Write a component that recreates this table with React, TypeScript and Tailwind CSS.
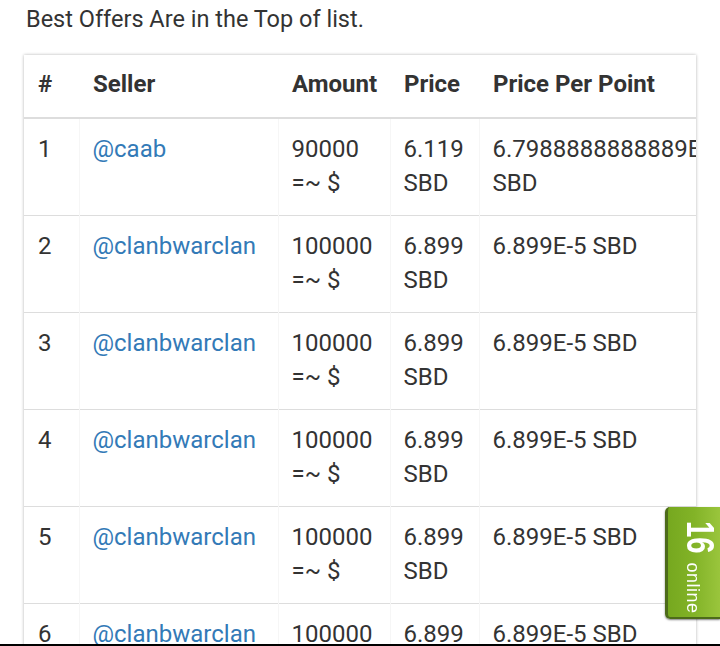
const offers = [
  { id: 1, seller: "@caab", amount: "90000", price: "6.119", ppp: "6.7988888888889E-5" },
  { id: 2, seller: "@clanbwarclan", amount: "100000", price: "6.899", ppp: "6.899E-5" },
  { id: 3, seller: "@clanbwarclan", amount: "100000", price: "6.899", ppp: "6.899E-5" },
  { id: 4, seller: "@clanbwarclan", amount: "100000", price: "6.899", ppp: "6.899E-5" },
  { id: 5, seller: "@clanbwarclan", amount: "100000", price: "6.899", ppp: "6.899E-5" },
  { id: 6, seller: "@clanbwarclan", amount: "100000", price: "6.899", ppp: "6.899E-5" },
];

export default function App() {
  return (
    <div className="h-[646px] overflow-hidden bg-white font-['Roboto','Liberation_Sans',sans-serif] text-[#333]">
      <p className="pl-[26px] pt-[3px] text-[23.5px] leading-[32px]">Best Offers Are in the Top of list.</p>

      <div className="ml-[24px] mt-[20px] w-[672px] overflow-hidden bg-white shadow-[0_0_3px_rgba(0,0,0,0.3)]">
        <table className="w-[672px] table-fixed border-collapse text-[24px] leading-[34px]">
          <colgroup>
            <col className="w-[55px]" />
            <col className="w-[199px]" />
            <col className="w-[112px]" />
            <col className="w-[89px]" />
            <col className="w-[217px]" />
          </colgroup>
          <thead>
            <tr className="border-b-2 border-[#dddddd] text-left">
              <th className="pl-[14px] pt-[12px] pb-[16px] font-bold">#</th>
              <th className="pl-[14px] pt-[12px] pb-[16px] font-bold">Seller</th>
              <th className="pl-[14px] pt-[12px] pb-[16px] font-bold">Amount</th>
              <th className="pl-[14px] pt-[12px] pb-[16px] font-bold">Price</th>
              <th className="pl-[14px] pt-[12px] pb-[16px] font-bold whitespace-nowrap">Price Per Point</th>
            </tr>
          </thead>
          <tbody>
            {offers.map((o) => (
              <tr key={o.id} className="border-b border-[#dddddd] align-top">
                <td className="pl-[14px] pt-[13px] pb-[15px]">{o.id}</td>
                <td className="border-l border-[#f6f6f6] pl-[13px] pt-[13px] pb-[15px] text-[#337ab7]">{o.seller}</td>
                <td className="border-l border-[#f6f6f6] pl-[13px] pt-[13px] pb-[15px]">
                  {o.amount}
                  <br />
                  =~ $
                </td>
                <td className="border-l border-[#f6f6f6] pl-[13px] pt-[13px] pb-[15px]">
                  {o.price}
                  <br />
                  SBD
                </td>
                <td className="border-l border-[#f6f6f6] pl-[13px] pt-[13px] pb-[15px]">
                  <span className="whitespace-nowrap">{o.ppp}</span> SBD
                </td>
              </tr>
            ))}
          </tbody>
        </table>
      </div>

      {/* online counter tab */}
      <div className="fixed right-0 top-[507px] h-[112px] w-[55px] overflow-hidden rounded-l-[5px] border-l-[3px] border-b-2 border-[#4d6b1a] bg-gradient-to-r from-[#76a81f] via-[#82b327] to-[#9ac53c] text-white shadow-[0_1px_2px_rgba(0,0,0,0.5)]">
        <div className="absolute left-1/2 top-1/2 h-[55px] w-[112px] -translate-x-1/2 -translate-y-1/2 rotate-90">
          <div className="flex items-baseline pl-[15px] pt-[2px] font-['Liberation_Sans',sans-serif] leading-none">
            <span className="mr-[-11px] inline-block origin-left scale-x-[0.75] text-[39px] font-bold">16</span>
            <span className="ml-[9px] text-[18px] tracking-[0.5px]">online</span>
          </div>
        </div>
      </div>

      <div className="fixed bottom-0 left-0 h-[2px] w-full bg-black" />
    </div>
  );
}
